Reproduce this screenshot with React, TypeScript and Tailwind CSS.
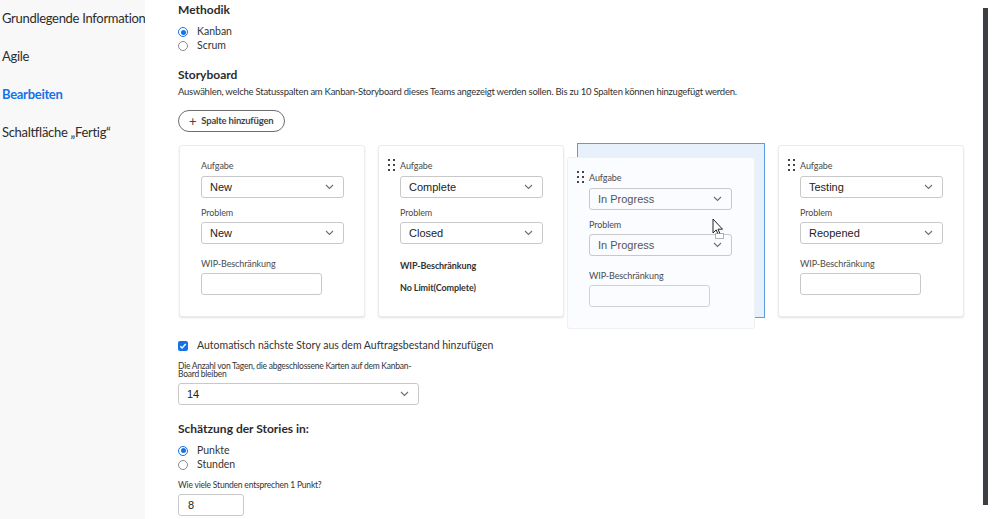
import React from 'react';

const font = { fontFamily: 'Lato, "Liberation Sans", sans-serif' };

function Chevron() {
  return (
    <svg width="9" height="6" viewBox="0 0 9 6" className="shrink-0">
      <path d="M1 1l3.5 3.5L8 1" fill="none" stroke="#6e6e6e" strokeWidth="1.1" />
    </svg>
  );
}

function Select({ value, w = 'w-[143px]', faded = false }: { value: string; w?: string; faded?: boolean }) {
  return (
    <div
      className={`flex h-[22px] ${w} items-center justify-between rounded-[3px] border border-[#c9c9c9] pl-[8px] pr-[9px] text-[11px] ${faded ? 'text-[#555]' : 'text-[#222]'}`}
      style={{ fontFamily: '"Liberation Sans", Arial, sans-serif' }}
    >
      <span>{value}</span>
      <Chevron />
    </div>
  );
}

function Handle() {
  return (
    <svg width="7" height="14" viewBox="0 0 7 14" className="absolute left-[9px] top-[13px]">
      {[0, 5, 10].map((y) =>
        [0, 5].map((x) => <rect key={`${x}-${y}`} x={x} y={y} width="2" height="2" fill="#444" />)
      )}
    </svg>
  );
}

function Label({ children, bold = false }: { children: React.ReactNode; bold?: boolean }) {
  return <div className={`text-[9px] leading-[11px] tracking-[-0.1px] ${bold ? 'font-bold text-[#333]' : 'text-[#4b4b4b]'}`}>{children}</div>;
}

function Card({ task, problem, handle = false, wip = true }: { task: string; problem: string; handle?: boolean; wip?: boolean }) {
  return (
    <div className="relative h-[172px] w-[186px] rounded-[3px] border border-[#ececec] bg-white px-[21px] pt-[14px] shadow-[0_1px_2px_rgba(0,0,0,0.12)]">
      {handle && <Handle />}
      <Label>Aufgabe</Label>
      <div className="mt-[5px]">
        <Select value={task} />
      </div>
      <div className="mt-[9px]">
        <Label>Problem</Label>
      </div>
      <div className="mt-[4px]">
        <Select value={problem} />
      </div>
      {wip ? (
        <>
          <div className="mt-[14px]">
            <Label>WIP-Beschränkung</Label>
          </div>
          <div className="mt-[4px] h-[22px] w-[121px] rounded-[3px] border border-[#c9c9c9]" />
        </>
      ) : (
        <>
          <div className="mt-[16px]">
            <Label bold>WIP-Beschränkung</Label>
          </div>
          <div className="mt-[11px]">
            <Label bold>No Limit(Complete)</Label>
          </div>
        </>
      )}
    </div>
  );
}

function Radio({ checked, label }: { checked: boolean; label: string }) {
  return (
    <div className="flex h-[14px] items-center gap-[9px]">
      {checked ? (
        <span className="flex h-[10px] w-[10px] items-center justify-center rounded-full border-[1.5px] border-[#1473e6]">
          <span className="h-[5px] w-[5px] rounded-full bg-[#1473e6]" />
        </span>
      ) : (
        <span className="h-[10px] w-[10px] rounded-full border border-[#8a8a8a]" />
      )}
      <span className="text-[10.5px] text-[#333]">{label}</span>
    </div>
  );
}

function Cursor() {
  return (
    <svg width="14" height="22" viewBox="0 0 14 22" className="absolute left-[144px] top-[60px]">
      <path d="M1 1v14l3.2-3.1 2.2 5 1.8-.8-2.2-4.9h4.5z" fill="#fff" stroke="#222" strokeWidth="1" />
      <rect x="3.5" y="15.5" width="8" height="5" fill="#fff" stroke="#444" strokeWidth="0.8" strokeDasharray="1 1" />
    </svg>
  );
}

export default function App() {
  return (
    <div className="flex h-[519px] w-[1000px] overflow-hidden bg-white" style={font}>
      {/* sidebar */}
      <aside className="w-[145px] shrink-0 overflow-hidden whitespace-nowrap bg-[#f8f8f8] pl-[2px] text-[13px] tracking-[-0.3px] text-[#2c2c2c]">
        <div className="flex h-[38px] items-center">Grundlegende Informationen</div>
        <div className="flex h-[38px] items-center">Agile</div>
        <div className="flex h-[38px] items-center font-bold text-[#1473e6]">Bearbeiten</div>
        <div className="flex h-[38px] items-center">Schaltfläche „Fertig“</div>
      </aside>

      {/* main */}
      <main className="flex-1 pl-[33px] text-[#2c2c2c]">
        <div className="pt-[2px] text-[12px] font-bold leading-[16px]">Methodik</div>
        <div className="mt-[7px]">
          <Radio checked label="Kanban" />
          <Radio checked={false} label="Scrum" />
        </div>
        <div className="mt-[14px] text-[12px] font-bold leading-[16px]">Storyboard</div>
        <div className="mt-[2px] text-[9.5px] leading-[14px] tracking-[-0.25px] text-[#333]">
          Auswählen, welche Statusspalten am Kanban-Storyboard dieses Teams angezeigt werden sollen. Bis zu 10 Spalten können hinzugefügt werden.
        </div>
        <button className="mt-[11px] flex h-[22px] items-center gap-[5px] rounded-full border border-[#6e6e6e] px-[10px] text-[9.5px] font-bold tracking-[-0.2px] text-[#444]">
          <span className="text-[13px] font-normal leading-none">+</span>
          Spalte hinzufügen
        </button>

        {/* columns */}
        <div className="mt-[13px] flex gap-[13px] pl-[1px]">
          <Card task="New" problem="New" />
          <Card task="Complete" problem="Closed" handle wip={false} />
          <div className="relative h-[175px] w-[188px] -mt-[2px] border border-[#5c9ce6] bg-[#e8f1fb]">
            <div className="absolute left-[-11px] top-[13px] h-[172px] w-[188px] rounded-[3px] border border-[#eef0f3] bg-[#fafcff] px-[21px] pt-[14px] text-[#555]">
              <Handle />
              <Label>Aufgabe</Label>
              <div className="mt-[5px]">
                <Select value="In Progress" faded />
              </div>
              <div className="mt-[9px]">
                <Label>Problem</Label>
              </div>
              <div className="mt-[4px]">
                <Select value="In Progress" faded />
              </div>
              <div className="mt-[14px]">
                <Label>WIP-Beschränkung</Label>
              </div>
              <div className="mt-[4px] h-[22px] w-[121px] rounded-[3px] border border-[#d2d2d2]" />
              <Cursor />
            </div>
          </div>
          <Card task="Testing" problem="Reopened" handle />
        </div>

        {/* options */}
        <div className="mt-[20px] flex items-center gap-[9px]">
          <span className="flex h-[10px] w-[10px] items-center justify-center rounded-[2px] bg-[#1473e6]">
            <svg width="8" height="8" viewBox="0 0 8 8">
              <path d="M1.3 4.2l1.8 1.8 3.6-4" fill="none" stroke="#fff" strokeWidth="1.4" />
            </svg>
          </span>
          <span className="text-[10.5px] text-[#333]">Automatisch nächste Story aus dem Auftragsbestand hinzufügen</span>
        </div>
        <div className="mt-[8px] w-[240px] text-[8.5px] leading-[8px] tracking-[-0.25px] text-[#333]">
          Die Anzahl von Tagen, die abgeschlossene Karten auf dem Kanban-Board bleiben
        </div>
        <div className="mt-[5px]">
          <Select value="14" w="w-[241px]" />
        </div>
        <div className="mt-[16px] text-[12px] font-bold leading-[16px]">Schätzung der Stories in:</div>
        <div className="mt-[7px]">
          <Radio checked label="Punkte" />
          <Radio checked={false} label="Stunden" />
        </div>
        <div className="mt-[8px] text-[8.5px] leading-[10px] tracking-[-0.2px] text-[#333]">Wie viele Stunden entsprechen 1 Punkt?</div>
        <div
          className="mt-[4px] flex h-[22px] w-[66px] items-center rounded-[3px] border border-[#c9c9c9] pl-[9px] text-[11px] text-[#222]"
          style={{ fontFamily: '"Liberation Sans", Arial, sans-serif' }}
        >
          8
        </div>
      </main>

      {/* scrollbar */}
      <div className="w-[17px] shrink-0 pt-[8px]">
        <div className="h-[497px] w-[5px] bg-[#3b3e42]" />
      </div>
    </div>
  );
}
